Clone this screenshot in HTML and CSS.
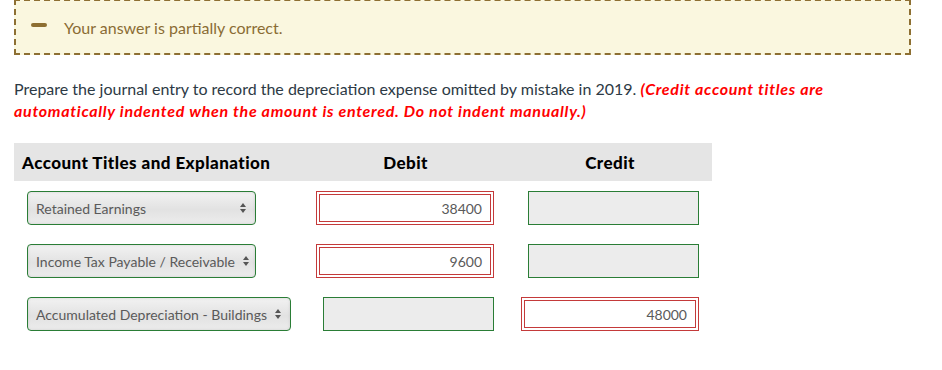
FILE: index.html
```html
<!DOCTYPE html>
<html>
<head>
<meta charset="utf-8">
<link rel="stylesheet" href="styles.css">
</head>
<body>
<div class="page">
  <div class="notice">
    <span class="minus"></span>
    <span class="notice-text">Your answer is partially correct.</span>
  </div>

  <p class="prompt">Prepare the journal entry to record the depreciation expense omitted by mistake in 2019. <b class="warn">(Credit account titles are automatically indented when the amount is entered. Do not indent manually.)</b></p>

  <div class="journal">
    <div class="head head-acct">Account Titles and Explanation</div>
    <div class="head head-num">Debit</div>
    <div class="head head-num">Credit</div>

    <div class="cell cell-acct"><div class="select sel-min"><span class="sel-text">Retained Earnings</span><span class="arrows"><i class="up"></i><i class="down"></i></span></div></div>
    <div class="cell cell-debit"><div class="field wrong"><span class="val">38400</span></div></div>
    <div class="cell cell-credit"><div class="field ok"></div></div>

    <div class="cell cell-acct"><div class="select sel-min"><span class="sel-text">Income Tax Payable / Receivable</span><span class="arrows"><i class="up"></i><i class="down"></i></span></div></div>
    <div class="cell cell-debit"><div class="field wrong"><span class="val">9600</span></div></div>
    <div class="cell cell-credit"><div class="field ok"></div></div>

    <div class="cell cell-acct"><div class="select"><span class="sel-text">Accumulated Depreciation - Buildings</span><span class="arrows"><i class="up"></i><i class="down"></i></span></div></div>
    <div class="cell cell-debit"><div class="field ok"></div></div>
    <div class="cell cell-credit"><div class="field wrong"><span class="val">48000</span></div></div>
  </div>
</div>
</body>
</html>
```

FILE: styles.css
```css
* { box-sizing: border-box; }
html, body { margin: 0; padding: 0; background: #fff; }
body { font-family: Lato, "Open Sans", sans-serif; color: #333; }

.page { padding: 0 31px 0 14px; }

.notice {
  height: 56px;
  margin-top: -1px;
  border: 2px dashed #8d6f32;
  background: #faf7df;
  display: flex;
  align-items: center;
  padding-left: 15px;
}
.minus {
  width: 16px;
  height: 4px;
  border-radius: 2px;
  background: #8d6f32;
  margin-right: 17px;
  margin-top: -4px;
}
.notice-text {
  font-size: 16px;
  color: #8a6c34;
  line-height: 20px;
  margin-top: 2px;
}

.prompt {
  margin: 23px 0 0 0;
  font-size: 16px;
  line-height: 22px;
  color: #2d3a45;
  width: 830px;
}
.warn {
  color: #f00;
  font-style: italic;
  font-weight: 700;
  letter-spacing: 0.7px;
}

.journal {
  margin-top: 21px;
  width: 698px;
  display: grid;
  grid-template-columns: 289px 205px 204px;
  grid-auto-rows: auto;
}
.head {
  background: #e5e5e5;
  height: 38px;
  display: flex;
  align-items: center;
  font-weight: 900;
  font-size: 17px;
  color: #000;
  letter-spacing: 0.45px;
}
.head-acct { padding-left: 8px; }
.head-num { justify-content: center; }

.cell {
  height: 34px;
  display: flex;
  align-items: center;
  margin-bottom: 19px;
}
.journal > .cell:nth-child(-n+6) { margin-top: 10px; }
.cell-acct { padding-left: 13px; }
.cell-debit { justify-content: flex-end; padding-right: 14px; }
.cell-credit { justify-content: flex-end; padding-right: 13px; }

.select {
  height: 34px;
  border: 1px solid #2a7d36;
  border-radius: 4px;
  background: linear-gradient(#f2f2f2, #e2e2e2 55%, #ececec);
  box-shadow: inset 0 0 3px rgba(0,0,0,0.12);
  display: flex;
  align-items: center;
  padding: 0 9px 0 8px;
  font-size: 14px;
  color: #5a5a5a;
}
.sel-min { width: 229px; justify-content: space-between; }
.sel-text { white-space: nowrap; margin-right: 8px; }
.arrows {
  display: flex;
  flex-direction: column;
  gap: 2px;
}
.arrows i {
  display: block;
  width: 0;
  height: 0;
  border-left: 3.5px solid transparent;
  border-right: 3.5px solid transparent;
}
.arrows .up { border-bottom: 4px solid #555; }
.arrows .down { border-top: 4px solid #555; }

.field {
  height: 34px;
  display: flex;
  align-items: center;
  justify-content: flex-end;
  font-size: 14px;
  color: #5a5a5a;
}
.field.ok {
  width: 171px;
  border: 1px solid #2a7d36;
  background: #ececec;
}
.field.wrong {
  width: 178px;
  border: 1px solid #c43a3a;
  background: #fff;
  padding: 2px;
}
.field.wrong .val {
  flex: 1;
  height: 100%;
  border: 1px solid #c43a3a;
  display: flex;
  align-items: center;
  justify-content: flex-end;
  padding-right: 8px;
}
```
